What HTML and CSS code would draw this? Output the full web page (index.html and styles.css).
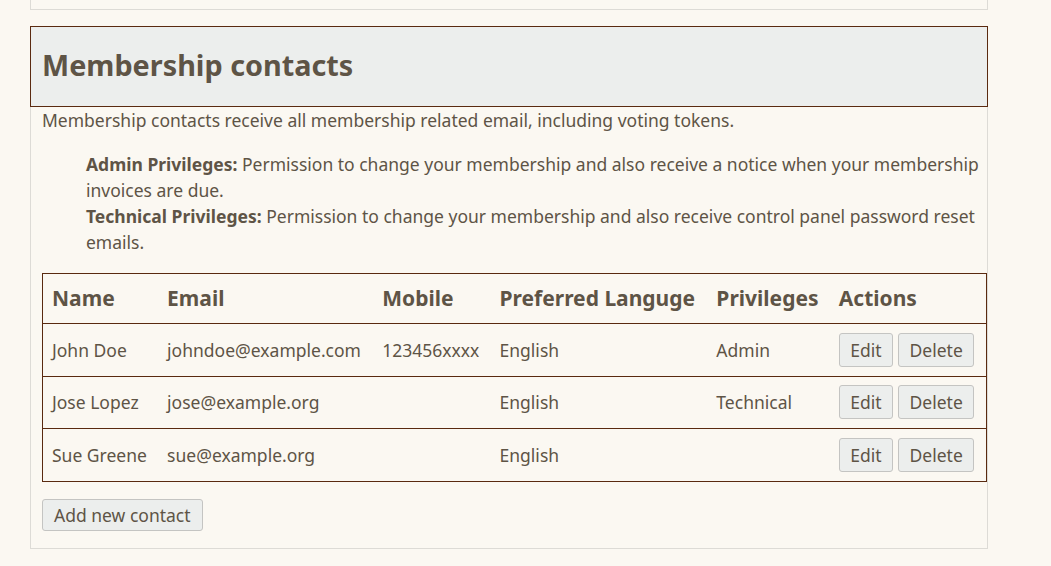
FILE: index.html
```html
<!DOCTYPE html>
<html lang="en">
<head>
<meta charset="utf-8">
<title>Membership contacts</title>
<link rel="stylesheet" href="styles.css">
</head>
<body>
<div class="prev-panel"></div>
<section class="panel">
  <h2 class="panel-title">Membership contacts</h2>
  <p class="intro">Membership contacts receive all membership related email, including voting tokens.</p>
  <div class="privs">
    <p><strong>Admin Privileges:</strong> Permission to change your membership and also receive a notice when your membership invoices are due.</p>
    <p><strong>Technical Privileges:</strong> Permission to change your membership and also receive control panel password reset emails.</p>
  </div>
  <table class="contacts">
    <thead>
      <tr><th>Name</th><th>Email</th><th>Mobile</th><th>Preferred Languge</th><th>Privileges</th><th>Actions</th></tr>
    </thead>
    <tbody>
      <tr><td>John Doe</td><td>johndoe@example.com</td><td>123456xxxx</td><td>English</td><td>Admin</td><td class="actions"><button class="btn">Edit</button><button class="btn">Delete</button></td></tr>
      <tr><td>Jose Lopez</td><td>jose@example.org</td><td></td><td>English</td><td>Technical</td><td class="actions"><button class="btn">Edit</button><button class="btn">Delete</button></td></tr>
      <tr><td>Sue Greene</td><td>sue@example.org</td><td></td><td>English</td><td></td><td class="actions"><button class="btn">Edit</button><button class="btn">Delete</button></td></tr>
    </tbody>
  </table>
  <div class="add-row"><button class="btn btn-add">Add new contact</button></div>
</section>
</body>
</html>
```
FILE: styles.css
```css
*, *::before, *::after {
  box-sizing: border-box;
}
html, body {
  margin: 0;
  padding: 0;
  background: #fbf8f2;
}
body {
  font-family: "Noto Sans", sans-serif;
  color: #5e5446;
  font-size: 17.5px;
}
.prev-panel {
  margin-left: 30px;
  width: 958px;
  height: 10px;
  border: 1px solid #dddbd6;
  border-top: none;
}
.panel {
  margin: 16px 0 0 30px;
  width: 958px;
  border: 1px solid #dddbd6;
  border-top: none;
  padding: 0 0 17px 11px;
}
.panel-title {
  margin: 0 -1px 0 -12px;
  background: #eceeed;
  border: 1px solid #5a2a10;
  font-size: 28.8px;
  font-weight: bold;
  line-height: 39px;
  padding: 18px 11px 22px;
  color: #5e5446;
}
.intro {
  margin: 0;
  line-height: 26px;
}
.privs {
  margin: 18px 0 18px 44px;
  line-height: 26px;
}
.privs p {
  margin: 0;
}
.contacts {
  width: 100%;
  border-collapse: collapse;
  border: 1px solid #5a2a10;
  font-size: 17.5px;
}
.contacts th {
  text-align: left;
  font-size: 21px;
  font-weight: bold;
  padding: 10px 10px 10px 9px;
  line-height: 29px;
}
.contacts td {
  padding: 12.8px 10px 12.8px 9px;
  line-height: 26px;
  border-top: 1px solid #5a2a10;
  white-space: nowrap;
}
.contacts td.actions {
  padding-top: 8px;
  padding-bottom: 8px;
}
.actions .btn {
  vertical-align: middle;
  margin-right: 5px;
}
.actions .btn:last-child {
  margin-right: 0;
}
.btn {
  font-family: "Noto Sans", sans-serif;
  font-size: 17.5px;
  color: #5e5446;
  background: #eceeed;
  border: 1px solid #c4c4c2;
  border-radius: 3px;
  padding: 3px 10.5px;
  line-height: 26px;
}
.add-row {
  margin-top: 17px;
  display: flex;
}
.btn-add {
  padding: 2px 11px;
}
```
